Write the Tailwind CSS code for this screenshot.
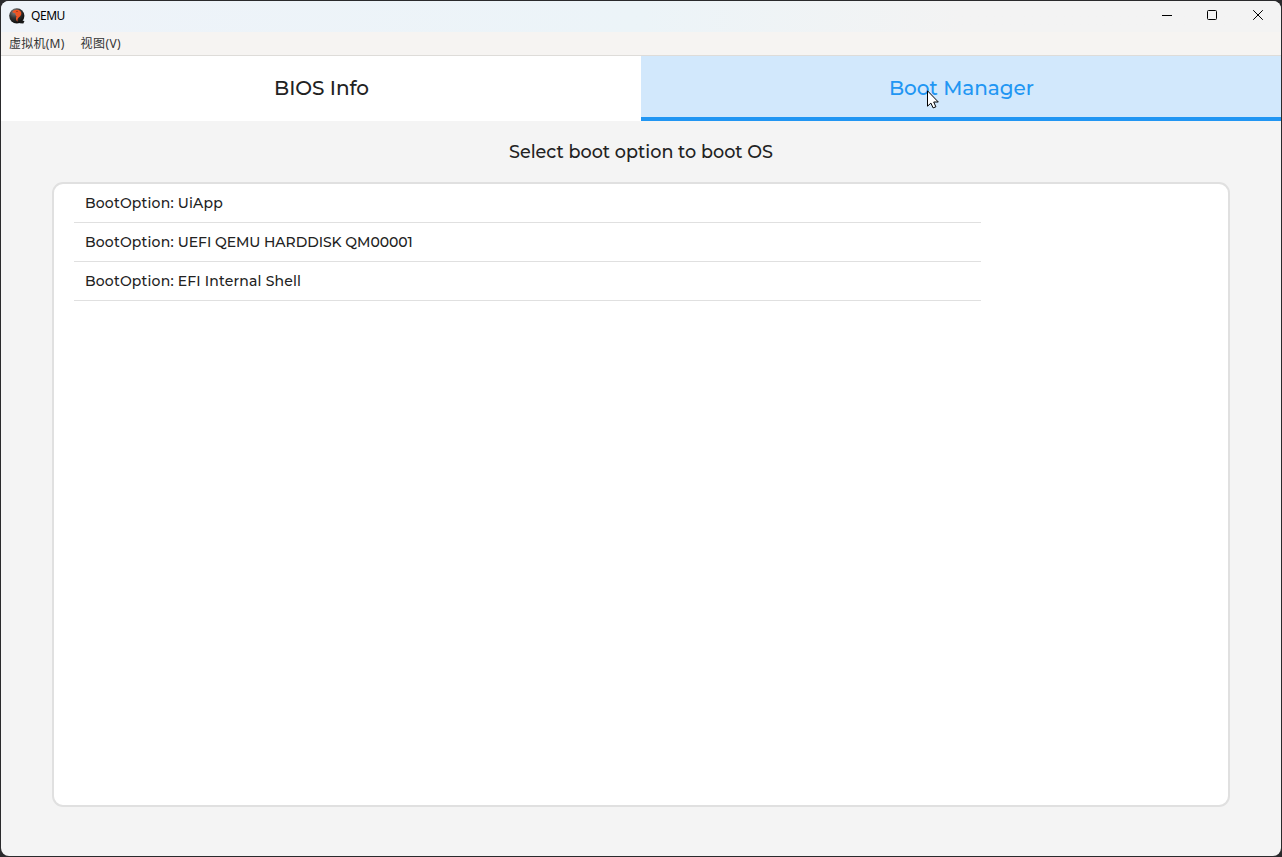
<!DOCTYPE html>
<html lang="zh-CN">
<head>
<meta charset="utf-8">
<title>QEMU</title>
<script src="https://cdn.jsdelivr.net/npm/@tailwindcss/browser@4"></script>
</head>
<body class="h-[857px] w-[1282px] overflow-hidden bg-[#2a2a2c]">
<div class="relative h-full w-full p-px">
  <div class="flex h-[855px] w-[1280px] flex-col overflow-hidden rounded-lg bg-[#f4f4f4] font-['Montserrat',Inter,sans-serif] font-medium text-[#222]">
    <header class="flex h-[31px] shrink-0 items-center bg-linear-to-r from-[#eef3f9] via-[#ecf4f8] via-50% to-[#f3f3f3] to-75% pl-2 font-['Noto_Sans',sans-serif] text-black">
      <svg class="-mt-px size-4" viewBox="0 0 16 16">
        <defs><radialGradient id="ball" cx=".35" cy=".25" r=".8"><stop offset="0" stop-color="#888"/><stop offset=".5" stop-color="#333"/><stop offset="1" stop-color="#080808"/></radialGradient></defs>
        <circle cx="7.8" cy="7.8" r="7.6" fill="url(#ball)"/>
        <path d="M11 12l4.5 1-1.2 2.5-3.6-.2z" fill="#171717"/>
        <path d="M3.2 4C5 1.5 9 .9 11.5 3.3c1.4 1.7 1 3.7-.3 4.9-1.3 1-2.4 1.7-2.6 3.1l-.2 2.4C7 12 6.5 10.4 7.5 8.2 6.4 7.5 6.2 6.3 6.3 5.1c-1.2-.3-2.1-.4-3.1-1.1z" fill="#ed5525"/>
        <circle cx="8" cy="3.6" r=".5" fill="#3b1a10"/>
      </svg>
      <span class="-mt-0.5 ml-1.5 text-[12px] font-normal leading-4 tracking-[-0.45px]">QEMU</span>
      <div class="ml-auto mr-px flex h-full text-black">
        <div class="flex w-[45px] items-center justify-center"><svg class="-mt-[3px] size-[10px]" viewBox="0 0 10 10"><path d="M0 5.5h10" stroke="currentColor"/></svg></div>
        <div class="flex w-[46px] items-center justify-center"><svg class="-mt-[3px] size-[10px]" viewBox="0 0 10 10"><rect x=".5" y=".5" width="9" height="9" rx="1" fill="none" stroke="currentColor"/></svg></div>
        <div class="flex w-[45px] items-center justify-center"><svg class="-mt-[3px] size-[10px]" viewBox="0 0 10 10"><path d="M.2.2l9.6 9.6M9.8.2L.2 9.8" stroke="currentColor"/></svg></div>
      </div>
    </header>
    <nav class="flex h-6 shrink-0 items-center gap-4 border-b border-[#dedcd9] bg-[#f6f4f2] pl-2 font-['Noto_Sans','Noto_Sans_CJK_SC',sans-serif] text-[12px] font-normal leading-none text-[#333]">
      <span class="tracking-[0.25px]">虚拟机(M)</span><span class="tracking-[0.4px]">视图(V)</span>
    </nav>
    <div class="grid h-[65px] shrink-0 grid-cols-2 text-[20px] leading-[61px]">
      <div class="h-[65px] bg-white pl-px pt-0.5 text-center tracking-[-0.05px]"><span>BIOS Info</span></div>
      <div class="h-[65px] overflow-hidden border-b-4 border-[#2196f3] bg-[#d2e8fc] pl-px pt-0.5 text-center text-[#2196f3]"><span>Boot Manager</span></div>
    </div>
    <h1 class="h-[61px] shrink-0 text-center text-[17.6px] leading-[62px]"><span>Select boot option to boot OS</span></h1>
    <main class="mx-[51px] h-[625px] shrink-0 rounded-[11px] border-2 border-[#e0e0e0] bg-white pl-5 text-[14px]">
      <ul class="w-[907px]">
        <li class="h-[39px] border-b border-[#e0e0e0] pl-[11px] leading-[38px]"><span class="tracking-[0.18px]">BootOption: UiApp</span></li>
        <li class="h-[39px] border-b border-[#e0e0e0] pl-[11px] leading-[38px]"><span class="tracking-[0.18px]">BootOption: </span><span class="tracking-[-0.05px]">UEFI QEMU HARDDISK QM00001</span></li>
        <li class="h-[39px] border-b border-[#e0e0e0] pl-[11px] leading-[38px]"><span class="tracking-[0.18px]">BootOption: EFI Internal Shell</span></li>
      </ul>
    </main>
  </div>
  <svg class="absolute left-[927px] top-[90px] h-[19px] w-[12px]" viewBox="0 0 12 19"><path d="M.5.8v15.4l3.4-3.1 2.2 4.8 2.8-1.1-2.2-4.8h4.6z" fill="#fff" stroke="#000"/></svg>
</div>
</body>
</html>
